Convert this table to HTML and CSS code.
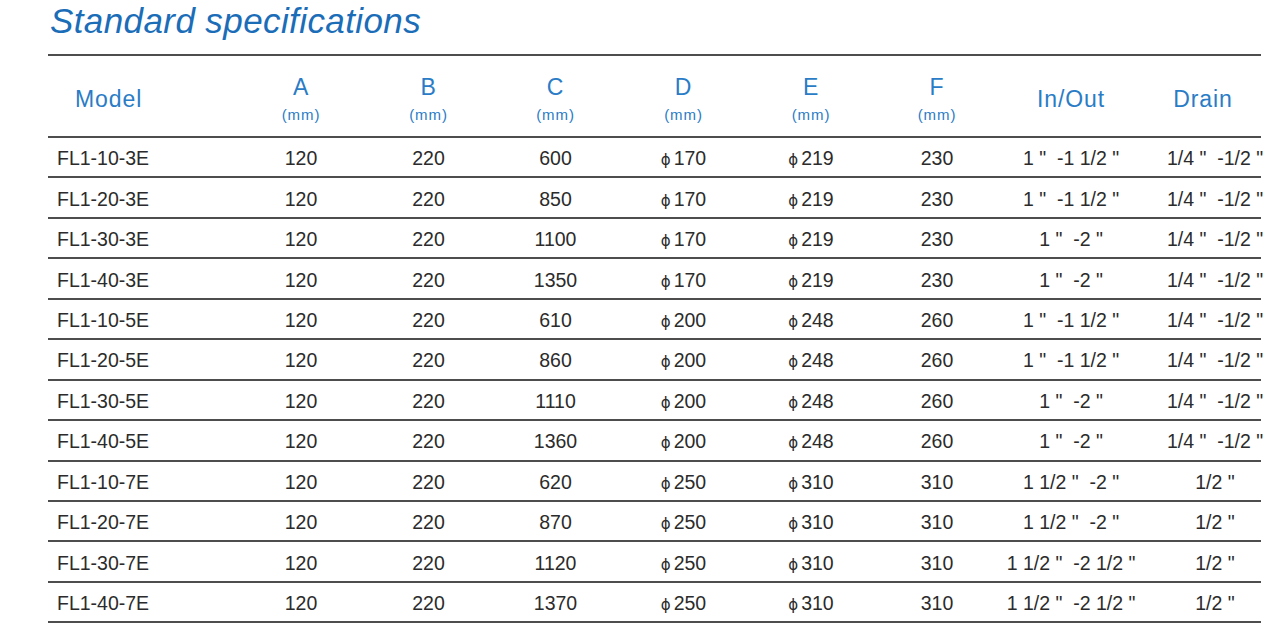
FILE: index.html
```html
<!DOCTYPE html>
<html>
<head>
<meta charset="utf-8">
<link rel="stylesheet" href="styles.css">
</head>
<body>
<div class="page">
  <h1 class="title">Standard specifications</h1>
  <div class="table">
    <div class="row head">
      <div class="cell model"><span class="h">Model</span></div>
      <div class="cell"><span class="h">A</span><span class="u">(mm)</span></div>
      <div class="cell"><span class="h">B</span><span class="u">(mm)</span></div>
      <div class="cell"><span class="h">C</span><span class="u">(mm)</span></div>
      <div class="cell"><span class="h">D</span><span class="u">(mm)</span></div>
      <div class="cell"><span class="h">E</span><span class="u">(mm)</span></div>
      <div class="cell"><span class="h">F</span><span class="u">(mm)</span></div>
      <div class="cell"><span class="h">In/Out</span></div>
      <div class="cell drh"><span class="h">Drain</span></div>
    </div>
    <div class="row"><div class="cell model">FL1-10-3E</div><div class="cell">120</div><div class="cell">220</div><div class="cell">600</div><div class="cell"><span class="phi">ϕ</span>170</div><div class="cell"><span class="phi">ϕ</span>219</div><div class="cell">230</div><div class="cell">1 "  -1 1/2 "</div><div class="cell dr">1/4 "  -1/2 "</div></div>
    <div class="row"><div class="cell model">FL1-20-3E</div><div class="cell">120</div><div class="cell">220</div><div class="cell">850</div><div class="cell"><span class="phi">ϕ</span>170</div><div class="cell"><span class="phi">ϕ</span>219</div><div class="cell">230</div><div class="cell">1 "  -1 1/2 "</div><div class="cell dr">1/4 "  -1/2 "</div></div>
    <div class="row"><div class="cell model">FL1-30-3E</div><div class="cell">120</div><div class="cell">220</div><div class="cell">1100</div><div class="cell"><span class="phi">ϕ</span>170</div><div class="cell"><span class="phi">ϕ</span>219</div><div class="cell">230</div><div class="cell">1 "  -2 "</div><div class="cell dr">1/4 "  -1/2 "</div></div>
    <div class="row"><div class="cell model">FL1-40-3E</div><div class="cell">120</div><div class="cell">220</div><div class="cell">1350</div><div class="cell"><span class="phi">ϕ</span>170</div><div class="cell"><span class="phi">ϕ</span>219</div><div class="cell">230</div><div class="cell">1 "  -2 "</div><div class="cell dr">1/4 "  -1/2 "</div></div>
    <div class="row"><div class="cell model">FL1-10-5E</div><div class="cell">120</div><div class="cell">220</div><div class="cell">610</div><div class="cell"><span class="phi">ϕ</span>200</div><div class="cell"><span class="phi">ϕ</span>248</div><div class="cell">260</div><div class="cell">1 "  -1 1/2 "</div><div class="cell dr">1/4 "  -1/2 "</div></div>
    <div class="row"><div class="cell model">FL1-20-5E</div><div class="cell">120</div><div class="cell">220</div><div class="cell">860</div><div class="cell"><span class="phi">ϕ</span>200</div><div class="cell"><span class="phi">ϕ</span>248</div><div class="cell">260</div><div class="cell">1 "  -1 1/2 "</div><div class="cell dr">1/4 "  -1/2 "</div></div>
    <div class="row"><div class="cell model">FL1-30-5E</div><div class="cell">120</div><div class="cell">220</div><div class="cell">1110</div><div class="cell"><span class="phi">ϕ</span>200</div><div class="cell"><span class="phi">ϕ</span>248</div><div class="cell">260</div><div class="cell">1 "  -2 "</div><div class="cell dr">1/4 "  -1/2 "</div></div>
    <div class="row"><div class="cell model">FL1-40-5E</div><div class="cell">120</div><div class="cell">220</div><div class="cell">1360</div><div class="cell"><span class="phi">ϕ</span>200</div><div class="cell"><span class="phi">ϕ</span>248</div><div class="cell">260</div><div class="cell">1 "  -2 "</div><div class="cell dr">1/4 "  -1/2 "</div></div>
    <div class="row"><div class="cell model">FL1-10-7E</div><div class="cell">120</div><div class="cell">220</div><div class="cell">620</div><div class="cell"><span class="phi">ϕ</span>250</div><div class="cell"><span class="phi">ϕ</span>310</div><div class="cell">310</div><div class="cell">1 1/2 "  -2 "</div><div class="cell dr">1/2 "</div></div>
    <div class="row"><div class="cell model">FL1-20-7E</div><div class="cell">120</div><div class="cell">220</div><div class="cell">870</div><div class="cell"><span class="phi">ϕ</span>250</div><div class="cell"><span class="phi">ϕ</span>310</div><div class="cell">310</div><div class="cell">1 1/2 "  -2 "</div><div class="cell dr">1/2 "</div></div>
    <div class="row"><div class="cell model">FL1-30-7E</div><div class="cell">120</div><div class="cell">220</div><div class="cell">1120</div><div class="cell"><span class="phi">ϕ</span>250</div><div class="cell"><span class="phi">ϕ</span>310</div><div class="cell">310</div><div class="cell">1 1/2 "  -2 1/2 "</div><div class="cell dr">1/2 "</div></div>
    <div class="row"><div class="cell model">FL1-40-7E</div><div class="cell">120</div><div class="cell">220</div><div class="cell">1370</div><div class="cell"><span class="phi">ϕ</span>250</div><div class="cell"><span class="phi">ϕ</span>310</div><div class="cell">310</div><div class="cell">1 1/2 "  -2 1/2 "</div><div class="cell dr">1/2 "</div></div>
  </div>
</div>
</body>
</html>
```

FILE: styles.css
```css
html, body {
  margin: 0;
  padding: 0;
  background: #ffffff;
}

.page {
  width: 1280px;
  height: 637px;
  overflow: hidden;
  padding-left: 48px;
  box-sizing: border-box;
  font-family: "Liberation Sans", Arial, sans-serif;
}

.title {
  margin: 0;
  padding: 1px 0 0 2px;
  height: 54px;
  box-sizing: border-box;
  font-size: 35px;
  line-height: 40px;
  font-weight: normal;
  font-style: italic;
  letter-spacing: 0.4px;
  color: #1b6db8;
}

.table {
  width: 1213px;
  border-top: 2px solid #4d4d4d;
}

.row {
  display: grid;
  grid-template-columns: 189px 128px 127px 127px 129px 126px 126px 142px 140px;
  width: 1213px;
  height: 40.45px;
  box-sizing: border-box;
  border-bottom: 2px solid #4d4d4d;
  align-items: center;
  font-size: 19.5px;
  color: #2b2b2b;
}

.row.head {
  height: 82px;
  color: #2a7cc6;
  padding-top: 6px;
}

.cell {
  text-align: center;
  white-space: pre;
  padding-top: 3px;
}

.cell.model {
  text-align: left;
  padding-left: 9px;
}

.head .cell {
  display: flex;
  flex-direction: column;
  align-items: center;
  gap: 6px;
  padding-top: 0;
}

.head .cell.model {
  align-items: flex-start;
  padding-left: 27px;
}

.head .drh {
  padding-right: 18px;
}

.h {
  font-size: 23px;
  line-height: 26px;
  letter-spacing: 0.9px;
}

.u {
  font-size: 15px;
  line-height: 18px;
  letter-spacing: 0.9px;
}

.phi {
  font-family: "DejaVu Sans", sans-serif;
  font-size: 15px;
  margin-right: 3px;
}

.dr {
  padding-left: 6px;
}
```
